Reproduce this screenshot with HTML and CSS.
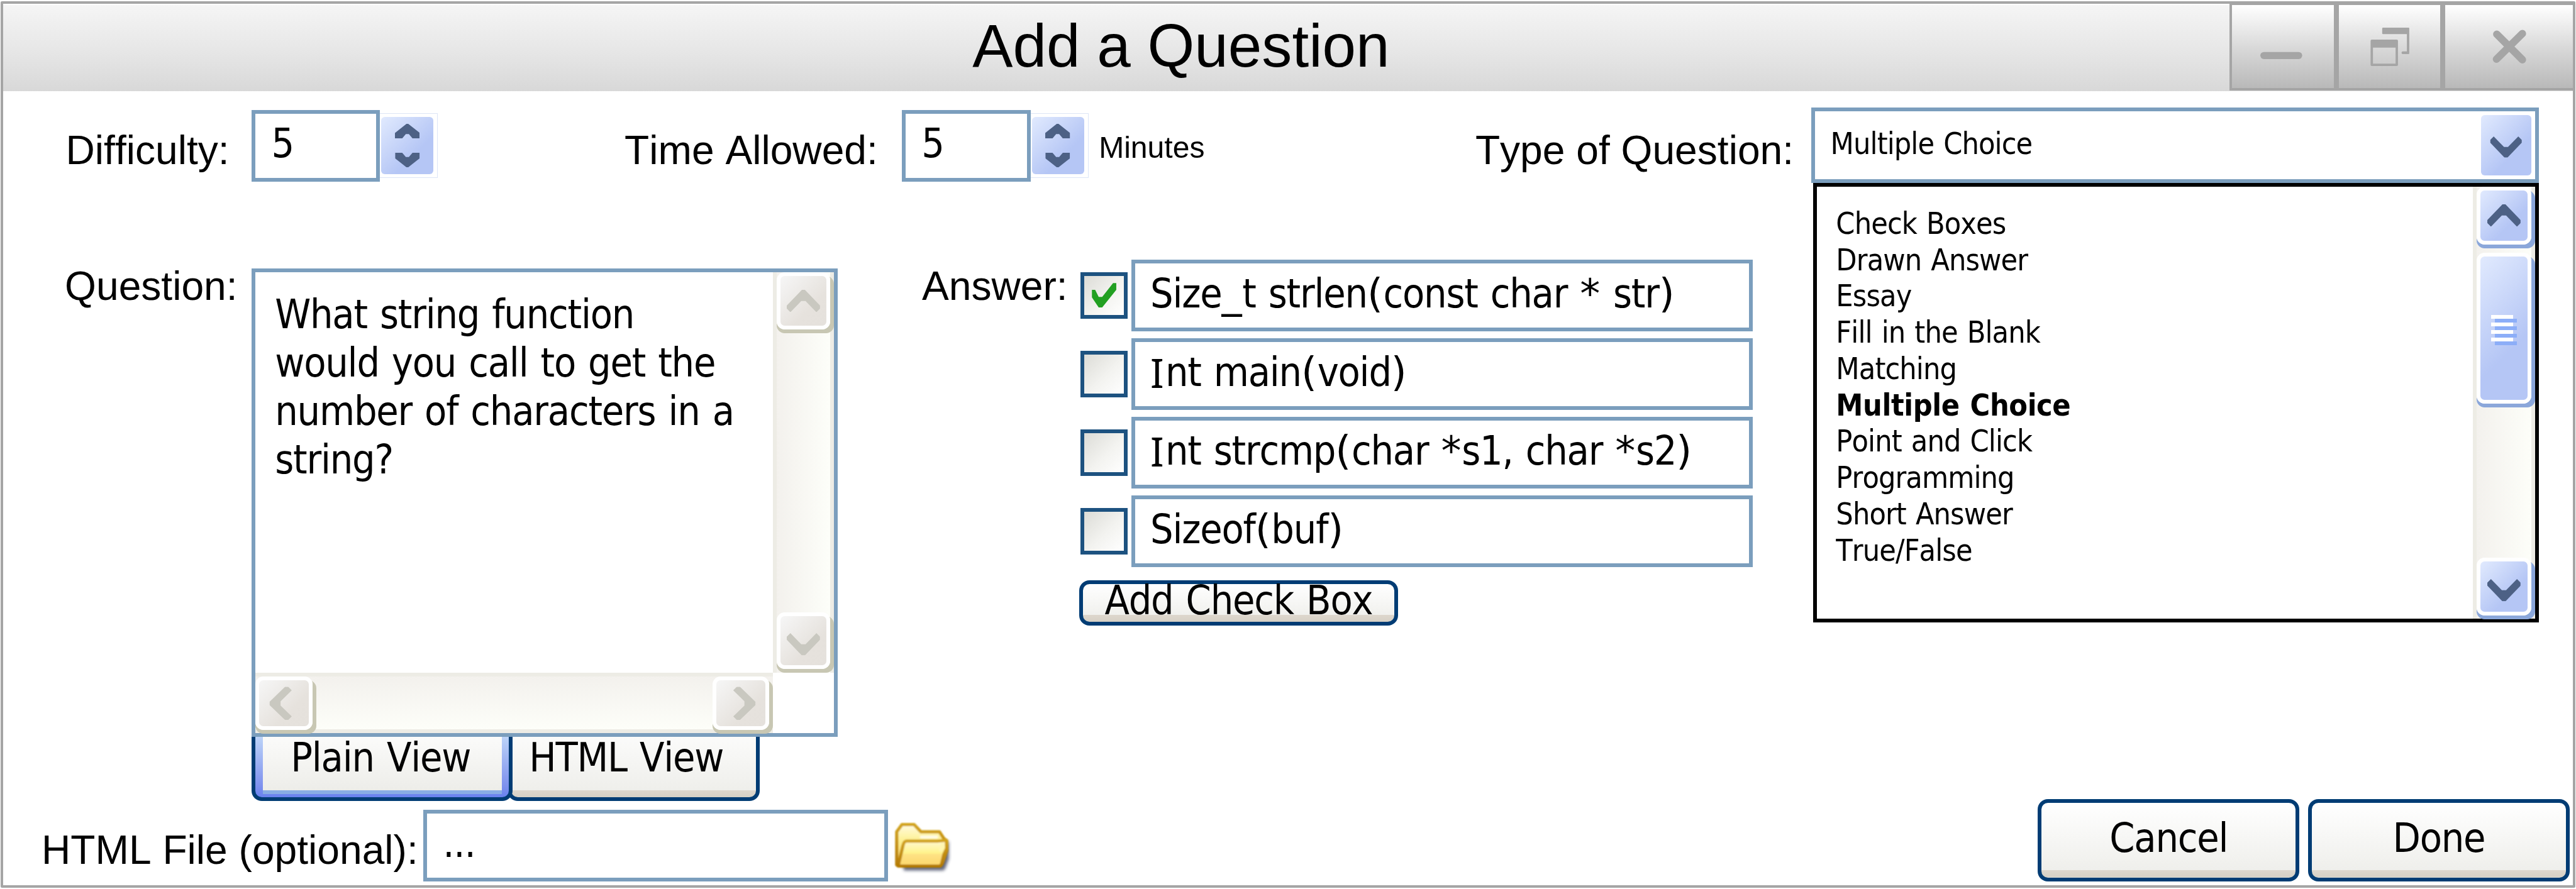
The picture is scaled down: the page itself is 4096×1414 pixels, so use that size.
FILE: index.html
```html
<!DOCTYPE html>
<html lang="en">
<head>
<meta charset="utf-8">
<title>Add a Question</title>
<link rel="stylesheet" href="styles.css">
</head>
<body>
<svg class="defs" width="0" height="0" aria-hidden="true">
  <symbol id="chev" viewBox="0 0 55 37"><path d="M25 0H30L55 26V31L49 37L31 18.500H24L6 37L0 31V26Z"/></symbol>
  <symbol id="spin" viewBox="0 0 41 24"><path d="M19 0H22L41 15V24H29L23 17H18L12 24H0V15Z"/></symbol>
</svg>
<div class="window">
  <header class="titlebar">
    <h1 class="title">Add a Question</h1>
    <div class="controls">
      <button class="control minimize" aria-label="Minimize"><svg viewBox="0 0 172 140"><rect x="48" y="79" width="71" height="12" rx="6"/></svg></button>
      <button class="control restore" aria-label="Restore"><svg viewBox="0 0 168 140"><path d="M72 38H116Q117 38 117 39V81Q117 82.500 115.500 82.500H106Q104 82.500 104 80.300T106 78H113V49H73Q71.500 49 71.500 47.500V39.500Q71.500 38 73 38ZM54 58H96Q98 58 98 60V101Q98 102.500 96 102.500H54Q52 102.500 52 101V60Q52 58 54 58ZM56 71.500V98.500H94V71.500Z" fill-rule="evenodd"/></svg></button>
      <button class="control close" aria-label="Close"><svg viewBox="0 0 211 140"><path d="M85 49L128 92M128 48L84.500 91" fill="none" stroke="#a5a5a5" stroke-width="12.500" stroke-linecap="round"/></svg></button>
    </div>
  </header>

  <section class="settings">
    <label class="label">Difficulty:</label>
    <div class="field">5</div>
    <div class="spinner"><div class="spin-face"><svg><use href="#spin"/></svg><svg class="down"><use href="#spin"/></svg></div></div>
    <label class="label time">Time Allowed:</label>
    <div class="field">5</div>
    <div class="spinner"><div class="spin-face"><svg><use href="#spin"/></svg><svg class="down"><use href="#spin"/></svg></div></div>
    <span class="unit">Minutes</span>
    <label class="label">Type of Question:</label>
    <div class="combo">
      <span class="combo-value">Multiple Choice</span>
      <button class="combo-button" aria-label="Open list"><svg class="chev down"><use href="#chev"/></svg></button>
      <div class="menu">
        <ul class="options">
          <li>Check Boxes</li>
          <li>Drawn Answer</li>
          <li>Essay</li>
          <li>Fill in the Blank</li>
          <li>Matching</li>
          <li class="selected">Multiple Choice</li>
          <li>Point and Click</li>
          <li>Programming</li>
          <li>Short Answer</li>
          <li>True/False</li>
        </ul>
        <div class="scroll vertical blue">
          <div class="sb-button"><svg class="chev"><use href="#chev"/></svg></div>
          <div class="thumb"><i></i><i></i><i></i><i></i></div>
          <div class="sb-button end"><svg class="chev down"><use href="#chev"/></svg></div>
        </div>
      </div>
    </div>
  </section>

  <section class="work">
    <label class="label question-label">Question:</label>
    <div class="question">
      <div class="editor">
        <p class="editor-text">What string function<br>would you call to get the<br>number of characters in a<br>string?</p>
        <div class="scroll vertical">
          <div class="sb-button"><svg class="chev"><use href="#chev"/></svg></div>
          <div class="sb-button end"><svg class="chev down"><use href="#chev"/></svg></div>
        </div>
        <div class="scroll horizontal">
          <div class="sb-button"><svg class="chev left"><use href="#chev"/></svg></div>
          <div class="sb-button end"><svg class="chev right"><use href="#chev"/></svg></div>
        </div>
      </div>
      <div class="tabs">
        <div class="tab active"><div class="tab-face">Plain View</div></div>
        <div class="tab">HTML View</div>
      </div>
    </div>
    <label class="label answer-label">Answer:</label>
    <div class="answers">
      <div class="answer"><span class="check"><svg viewBox="0 0 66 66"><path d="M12.500 23.500H18L24 35.500H30L48.500 12H54V23.500L30 53.500H24L12.500 36.500Z" fill="#22a022"/></svg></span><div class="field">Size<span class="sym">_</span>t strlen<span class="sym">(</span>const char <span class="sym">*</span> str<span class="sym">)</span></div></div>
      <div class="answer"><span class="check"></span><div class="field"><span class="cap-i">I</span>nt main<span class="sym">(</span>void<span class="sym">)</span></div></div>
      <div class="answer"><span class="check"></span><div class="field"><span class="cap-i">I</span>nt strcmp<span class="sym">(</span>char <span class="sym">*</span>s1, char <span class="sym">*</span>s2<span class="sym">)</span></div></div>
      <div class="answer"><span class="check"></span><div class="field">Sizeof<span class="sym">(</span>buf<span class="sym">)</span></div></div>
      <button class="button add">Add Check Box</button>
    </div>
  </section>

  <footer class="footer">
    <label class="label file-label">HTML File (optional):</label>
    <div class="field file">...</div>
    <svg class="folder" viewBox="24 56 288 264">
      <defs>
        <linearGradient id="front" x1="0" y1="0" x2="0" y2="1"><stop offset="0" stop-color="#fff9d8"/><stop offset=".5" stop-color="#fff38a"/><stop offset=".55" stop-color="#fee285"/><stop offset="1" stop-color="#fdd76a"/></linearGradient>
        <linearGradient id="back" x1="0" y1="0" x2="0" y2="1"><stop offset="0" stop-color="#fffbe0"/><stop offset=".4" stop-color="#fef190"/><stop offset="1" stop-color="#f8cf6a"/></linearGradient>
        <linearGradient id="edge" x1="0" y1="0" x2="0" y2="1"><stop offset="0" stop-color="#d2a41f"/><stop offset="1" stop-color="#b47a04"/></linearGradient>
        <filter id="soft" x="-10%" y="-10%" width="120%" height="120%"><feGaussianBlur stdDeviation="4"/></filter>
        <filter id="shade" x="-10%" y="-20%" width="120%" height="140%"><feGaussianBlur stdDeviation="8"/></filter>
      </defs>
      <path d="M62 250H262L284 160L294 150V240L276 288Q272 298 258 298H72Z" fill="#2b3350" opacity=".75" filter="url(#shade)"/>
      <g filter="url(#soft)" stroke="url(#edge)" stroke-width="16" stroke-linejoin="round">
        <path d="M36 270V106L62 70H122L156 106H248L270 140L284 150V200L262 262L250 276H44Z" fill="url(#back)"/>
        <path d="M158 132H234" stroke="#fffbe8" stroke-width="14" stroke-linecap="round"/>
        <path d="M84 152H238L282 148L284 188L270 218L258 268Q254 276 246 276H48Q42 276 46 262L66 178Q72 152 84 152Z" fill="url(#front)"/>
        <path d="M262 170L254 196" stroke="#fff6b0" stroke-width="16" stroke-linecap="round"/>
      </g>
    </svg>
    <button class="button cancel">Cancel</button>
    <button class="button done">Done</button>
  </footer>
</div>
</body>
</html>
```

FILE: styles.css
```css
/* 1rem spans 1/42.57 of the window width; every length scales from it */
html { font-size: 96.218px; background: #fff; }
* {
  box-sizing: border-box;
  letter-spacing: -.019em;
  word-spacing: .046em;
}
body {
  margin: 0;
  padding: .02rem 0 0 .01rem;
  height: 1414px;
  overflow: hidden;
  color: #000;
  font-family: "DejaVu Sans Condensed", "DejaVu Sans", sans-serif;
  font-stretch: semi-condensed;
  font-kerning: none;
}
h1, p, ul { margin: 0; padding: 0; }
button { font: inherit; font-kerning: none; color: inherit; padding: 0; margin: 0; }
.defs { position: absolute; }

.window {
  width: 42.55rem;
  height: 14.66rem;
  border: 4px solid #a5a5a5;
  border-radius: 2px;
  background: #fff;
  display: flex;
  flex-direction: column;
}

/* title bar */
.titlebar {
  flex: none;
  height: 1.45rem;
  display: flex;
  border-top: 2px solid #fff;
  background: linear-gradient(#f5f5f5, #e6e6e6 55%, #d8d8d8);
}
.title {
  flex: 1;
  padding-left: 16.02rem;
  font: 400 1rem/1.2rem "Liberation Sans", Arial, sans-serif;
  font-stretch: normal;
  font-kerning: none;
  letter-spacing: 0;
  word-spacing: 0;
  margin-top: .07rem;
}
.controls {
  flex: none;
  width: 5.67rem;
  height: 1.46rem;
  margin-top: -4px;
  display: flex;
  border: 4px solid #a5a5a5;
  border-width: 4px 0 4px 4px;
}
.control {
  border: 0 solid #a5a5a5;
  border-right-width: 8px;
  background: linear-gradient(#fff, #dadada 50%, #b9b9b9);
  display: flex;
}
.minimize { width: 1.76rem; }
.restore { width: 1.76rem; }
.close { flex: 1; border-right: 0; }
.control svg { width: 100%; height: 100%; fill: #a5a5a5; }

/* shared text and controls */
.label, .unit {
  font: .6667rem/.8rem "Liberation Sans", Arial, sans-serif;
  font-stretch: normal;
  font-kerning: none;
  letter-spacing: 0;
  word-spacing: 0;
  white-space: nowrap;
}
.field {
  height: 1.182rem;
  border: 6px solid #7b9ebd;
  background: #fff;
  padding: 0 0 .07rem .26rem;
  display: flex;
  align-items: center;
  font-size: .6667rem;
  line-height: .8rem;
  white-space: pre;
}
.sym { font-family: "DejaVu Sans", sans-serif; font-stretch: normal; letter-spacing: .01em; line-height: 0; }
.cap-i { font-family: "Noto Sans", sans-serif; font-stretch: normal; letter-spacing: .034em; line-height: 0; }
.chev { width: .55rem; height: .37rem; fill: #4d6185; display: block; }
.down { transform: rotate(180deg); }

/* settings row */
.settings {
  flex: none;
  height: 2.785rem;
  padding-left: 1.035rem;
  display: grid;
  grid-template-columns: 3.075rem 2.12rem 4.04rem 4.585rem 2.13rem 1.122rem 6.223rem 5.553rem 12.02rem;
  align-items: start;
}
.settings .label { margin-top: .58rem; }
.settings .field { margin-top: .305rem; }
.unit { font-size: .5rem; line-height: .6rem; margin-top: .627rem; }
.spinner {
  width: .95rem;
  height: 1.07rem;
  margin-top: .36rem;
  padding: .05rem .06rem .05rem .015rem;
  border: 1px solid #dde5f6;
  border-left: 0;
  display: flex;
}
.spin-face {
  flex: 1;
  border-radius: .06rem;
  background: linear-gradient(135deg, #e1eafe, #b5c6f5 65%, #b5c6f5);
  display: flex;
  flex-direction: column;
  align-items: center;
  justify-content: center;
  gap: .23rem;
}
.spin-face svg { width: .41rem; height: .24rem; fill: #4d6185; }

.combo {
  position: relative;
  height: 1.243rem;
  margin-top: .27rem;
  border: 6px solid #7b9ebd;
  display: flex;
  justify-content: space-between;
  padding: .06rem .06rem .06rem .254rem;
}
.combo-value { font-size: .5rem; line-height: .955rem; }
.combo-button {
  width: .83rem;
  border: 0;
  border-radius: .06rem;
  background: linear-gradient(135deg, #e1eafe, #b5c6f5 65%, #b5c6f5);
  display: flex;
  align-items: center;
  justify-content: center;
}
.combo-button .chev { width: .534rem; height: .35rem; margin-top: .06rem; }

.menu {
  position: absolute;
  left: calc(.025rem - 6px);
  top: calc(1.243rem - 6px);
  width: 11.995rem;
  height: 7.268rem;
  border: 6px solid #000;
  background: #fff;
  display: flex;
  justify-content: space-between;
}
.options { list-style: none; padding: .312rem 0 0 .32rem; font-size: .5rem; line-height: .6rem; }
.selected { font-weight: 700; letter-spacing: -.008em; }

/* scroll bars */
.scroll { display: flex; border: 0 solid #edece5; }
.vertical {
  width: 1.01rem;
  flex-direction: column;
  border-width: 0 6px;
  padding-bottom: .06rem;
  background: linear-gradient(90deg, #f3f1ed, #fdfef9);
}
.horizontal {
  height: 1rem;
  border-width: 6px 0;
  padding-right: .06rem;
  background: linear-gradient(#f3f1ed, #fdfef9);
}
.sb-button {
  flex: none;
  width: .89rem;
  height: .94rem;
  border: 6px solid #fff;
  border-radius: .13rem;
  background: linear-gradient(135deg, #f6f6f6, #e6e2dd 65%, #e5e1dc);
  box-shadow: 6px 6px 0 #c8c7b3, 0 6px 0 #c8c7b3;
  display: flex;
  align-items: center;
  justify-content: center;
}
.sb-button .chev { flex: none; fill: #c9c8c0; }
.vertical .end { margin-top: auto; }
.vertical .end .chev { margin-top: .12rem; }
.horizontal .sb-button { width: .94rem; height: .88rem; }
.horizontal .end { margin-left: auto; }
.left { transform: translateX(-.055rem) rotate(-90deg); }
.right { transform: translateX(.065rem) rotate(90deg); }
.blue { width: 1.025rem; }
.blue .sb-button, .thumb {
  width: .9rem;
  height: .955rem;
  background: linear-gradient(135deg, #e1eafe, #b5c6f5 65%, #b5c6f5);
  box-shadow: 6px 6px 0 #8ba7da, 0 6px 0 #8ba7da;
}
.blue .sb-button .chev { fill: #4d6185; }
.blue .thumb {
  flex: none;
  height: 2.49rem;
  margin-top: .14rem;
  border: 6px solid #fff;
  border-radius: .13rem;
  display: flex;
  flex-direction: column;
  align-items: center;
  justify-content: center;
  gap: 6px;
}
.thumb i { width: .36rem; height: 6px; background: #fff; box-shadow: 6px 6px 0 #8caef8; margin-right: .06rem; }

/* question and answers */
.work { flex: none; height: 8.915rem; display: flex; align-items: flex-start; }
.question-label { margin: .035rem 0 0 1.02rem; width: 3.09rem; }
.question { width: 9.682rem; margin-top: .145rem; }
.editor {
  height: 7.743rem;
  border: 6px solid #7b9ebd;
  background: #fff;
  display: grid;
  grid-template-columns: 1fr 1.01rem;
  grid-template-rows: 1fr 1rem;
}
.editor-text { padding: .297rem 0 0 .32rem; font-size: .6667rem; line-height: .8rem; white-space: nowrap; }
.tabs { display: flex; height: 1.057rem; font-size: .6667rem; line-height: .686rem; white-space: nowrap; }
.tab {
  width: 4.165rem;
  margin-left: -.08rem;
  padding-left: .29rem;
  border: 6px solid #003c74;
  border-top: 0;
  border-radius: 0 0 .17rem .17rem;
  background: linear-gradient(#ded7cd, #d6d0c5) bottom / 100% .12rem no-repeat, linear-gradient(#fbfbfa, #edede9);
}
.tab.active {
  position: relative;
  width: 4.31rem;
  margin-left: 0;
  padding: 0 .12rem .12rem;
  background: linear-gradient(#bcd3f8, #7f92ee 80%, #6982ee);
}
.tab-face {
  height: 100%;
  padding-left: .46rem;
  background: linear-gradient(#fbfbfa, #edede9);
  box-shadow: 0 6px 0 #89ade4;
}
.answer-label { margin: .035rem 0 0 1.393rem; width: 2.624rem; }
.answers { width: 11.11rem; display: flex; flex-direction: column; gap: .116rem; }
.answer { display: flex; align-items: center; justify-content: space-between; }
.answer .field { width: 10.274rem; padding-left: .25rem; padding-bottom: .06rem; }
.check {
  width: .777rem;
  height: .765rem;
  border: 6px solid #1d5280;
  background: linear-gradient(135deg, #dcdcd7, #f3f3f0 55%, #fff);
}
.check svg { display: block; width: 100%; height: 100%; }

.button {
  border: 6px solid #003c74;
  border-radius: .17rem;
  background: linear-gradient(#ded7cd, #d6d0c5) bottom / 100% .12rem no-repeat, linear-gradient(#fff, #edede9);
  font-size: .6667rem;
  line-height: .5rem;
  display: flex;
  align-items: center;
  justify-content: center;
  white-space: nowrap;
}
.add { width: 5.27rem; height: .754rem; margin: .1rem 0 0 -.027rem; padding-bottom: .08rem; }

/* bottom row */
.footer { flex: none; height: 1.42rem; display: flex; align-items: flex-start; }
.file-label { margin: .45rem 0 0 .635rem; width: 6.31rem; }
.file { width: 7.675rem; margin-top: .18rem; }
.folder { width: .96rem; height: .88rem; margin: .375rem 0 0 .11rem; }
.cancel, .done { width: 4.32rem; height: 1.357rem; padding-bottom: .065rem; }
.cancel { margin-left: auto; }
.done { margin: 0 .055rem 0 .145rem; }
```
